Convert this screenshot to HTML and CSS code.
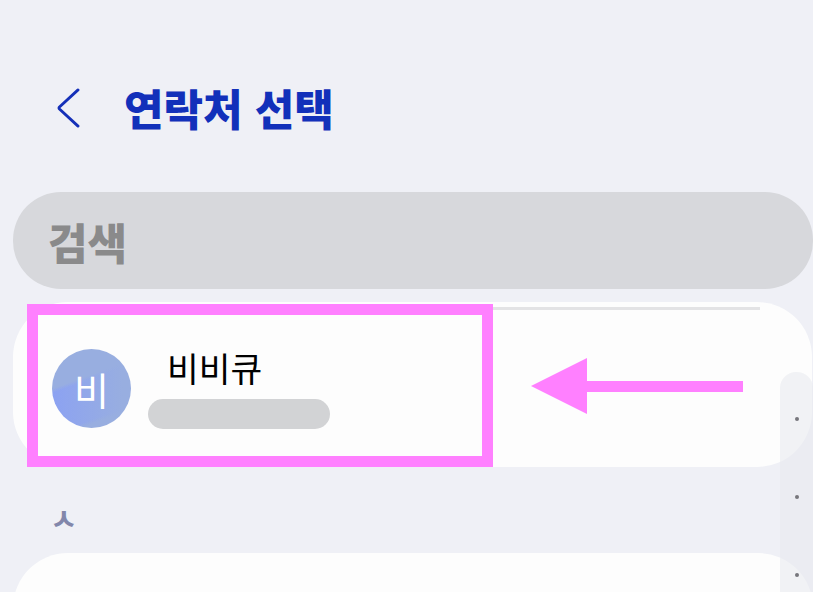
FILE: index.html
```html
<!DOCTYPE html>
<html lang="ko">
<head>
<meta charset="utf-8">
<title>연락처 선택</title>
<link rel="stylesheet" href="styles.css">
</head>
<body>
<main class="screen">
  <header class="header">
    <svg class="back" viewBox="0 0 24 42" aria-hidden="true"><path d="M22 2 L2.5 20 Q1.6 21 2.5 22 L22 40"/></svg>
    <h1 class="title">연락처 선택</h1>
  </header>
  <div class="search">검색</div>
  <section class="card first">
    <div class="divider"></div>
    <div class="contact">
      <div class="avatar">비</div>
      <div class="info">
        <div class="name">비비큐</div>
        <div class="redacted"></div>
      </div>
    </div>
  </section>
  <div class="index-label">ㅅ</div>
  <section class="card second"></section>

  <div class="scrollbar">
    <span class="dot"></span><span class="dot"></span><span class="dot"></span>
  </div>
  <div class="mark-box"></div>
  <svg class="mark-arrow" viewBox="0 0 212 56" aria-hidden="true"><path d="M0 28 L56 0 V23 H212 V34 H56 V56 Z"/></svg>
</main>
</body>
</html>
```
FILE: styles.css
```css
* { box-sizing: border-box; }
html, body { margin: 0; padding: 0; }
body { background: #eff0f6; font-family: "Noto Sans CJK KR", "Noto Sans", sans-serif; }
.screen { position: relative; width: 813px; height: 592px; overflow: hidden; background: #eff0f6; }

.header { display: flex; align-items: center; height: 192px; padding: 24px 0 0 57px; }
.back { width: 23px; height: 40px; flex: none; }
.back path { fill: none; stroke: #1530b8; stroke-width: 3; stroke-linecap: round; stroke-linejoin: round; }
.title { margin: -3px 0 0 44px; font-size: 43px; line-height: 60px; font-weight: 900; color: #1230ba; white-space: nowrap; }

.search { display: flex; align-items: center; height: 97px; margin-left: 13px; padding-left: 35px; border-radius: 48px; background: #d7d8dc; font-size: 43px; font-weight: 900; color: #8a8a8b; }

.card { margin-left: 13px; background: #fdfdfd; border-radius: 55px; }
.first { position: relative; height: 165px; margin-top: 13px; width: 799px; padding-top: 47px; }
.divider { position: absolute; top: 5px; left: 40px; right: 52px; height: 3px; background: #e3e3e5; }
.contact { display: flex; align-items: flex-start; gap: 17px; padding-left: 39px; }
.avatar { display: flex; align-items: center; justify-content: center; width: 79px; height: 79px; flex: none; border-radius: 50%; background: linear-gradient(160deg, #98aee0 0 37%, transparent 41% 79%, #98aee0 83%), linear-gradient(90deg, #8ca2f2, #98aee0 90%); color: #ffffff; font-size: 38px; font-weight: 400; }
.info { display: flex; flex-direction: column; margin-top: -2px; }
.name { margin-left: 19px; font-size: 34.5px; line-height: 40px; color: #000000; white-space: nowrap; }
.redacted { width: 182px; height: 30px; margin-top: 12px; border-radius: 15px; background: #d2d3d5; }

.index-label { height: 86px; padding: 33px 0 0 50px; font-size: 30px; line-height: 34px; font-weight: 700; color: #8287ab; }
.second { width: 800px; height: 200px; }

.scrollbar { position: absolute; top: 372px; left: 780px; width: 33px; height: 220px; padding-top: 45px; display: flex; flex-direction: column; align-items: center; gap: 74px; border-radius: 16px 16px 0 0; background: rgba(232, 233, 238, 0.55); }
.dot { width: 4px; height: 4px; flex: none; border-radius: 50%; background: #77777c; }

.mark-box { position: absolute; top: 304px; left: 27px; width: 466px; height: 163px; border: 11px solid #ff80ff; }
.mark-arrow { position: absolute; top: 358px; left: 531px; width: 212px; height: 56px; }
.mark-arrow path { fill: #ff80ff; }
```
